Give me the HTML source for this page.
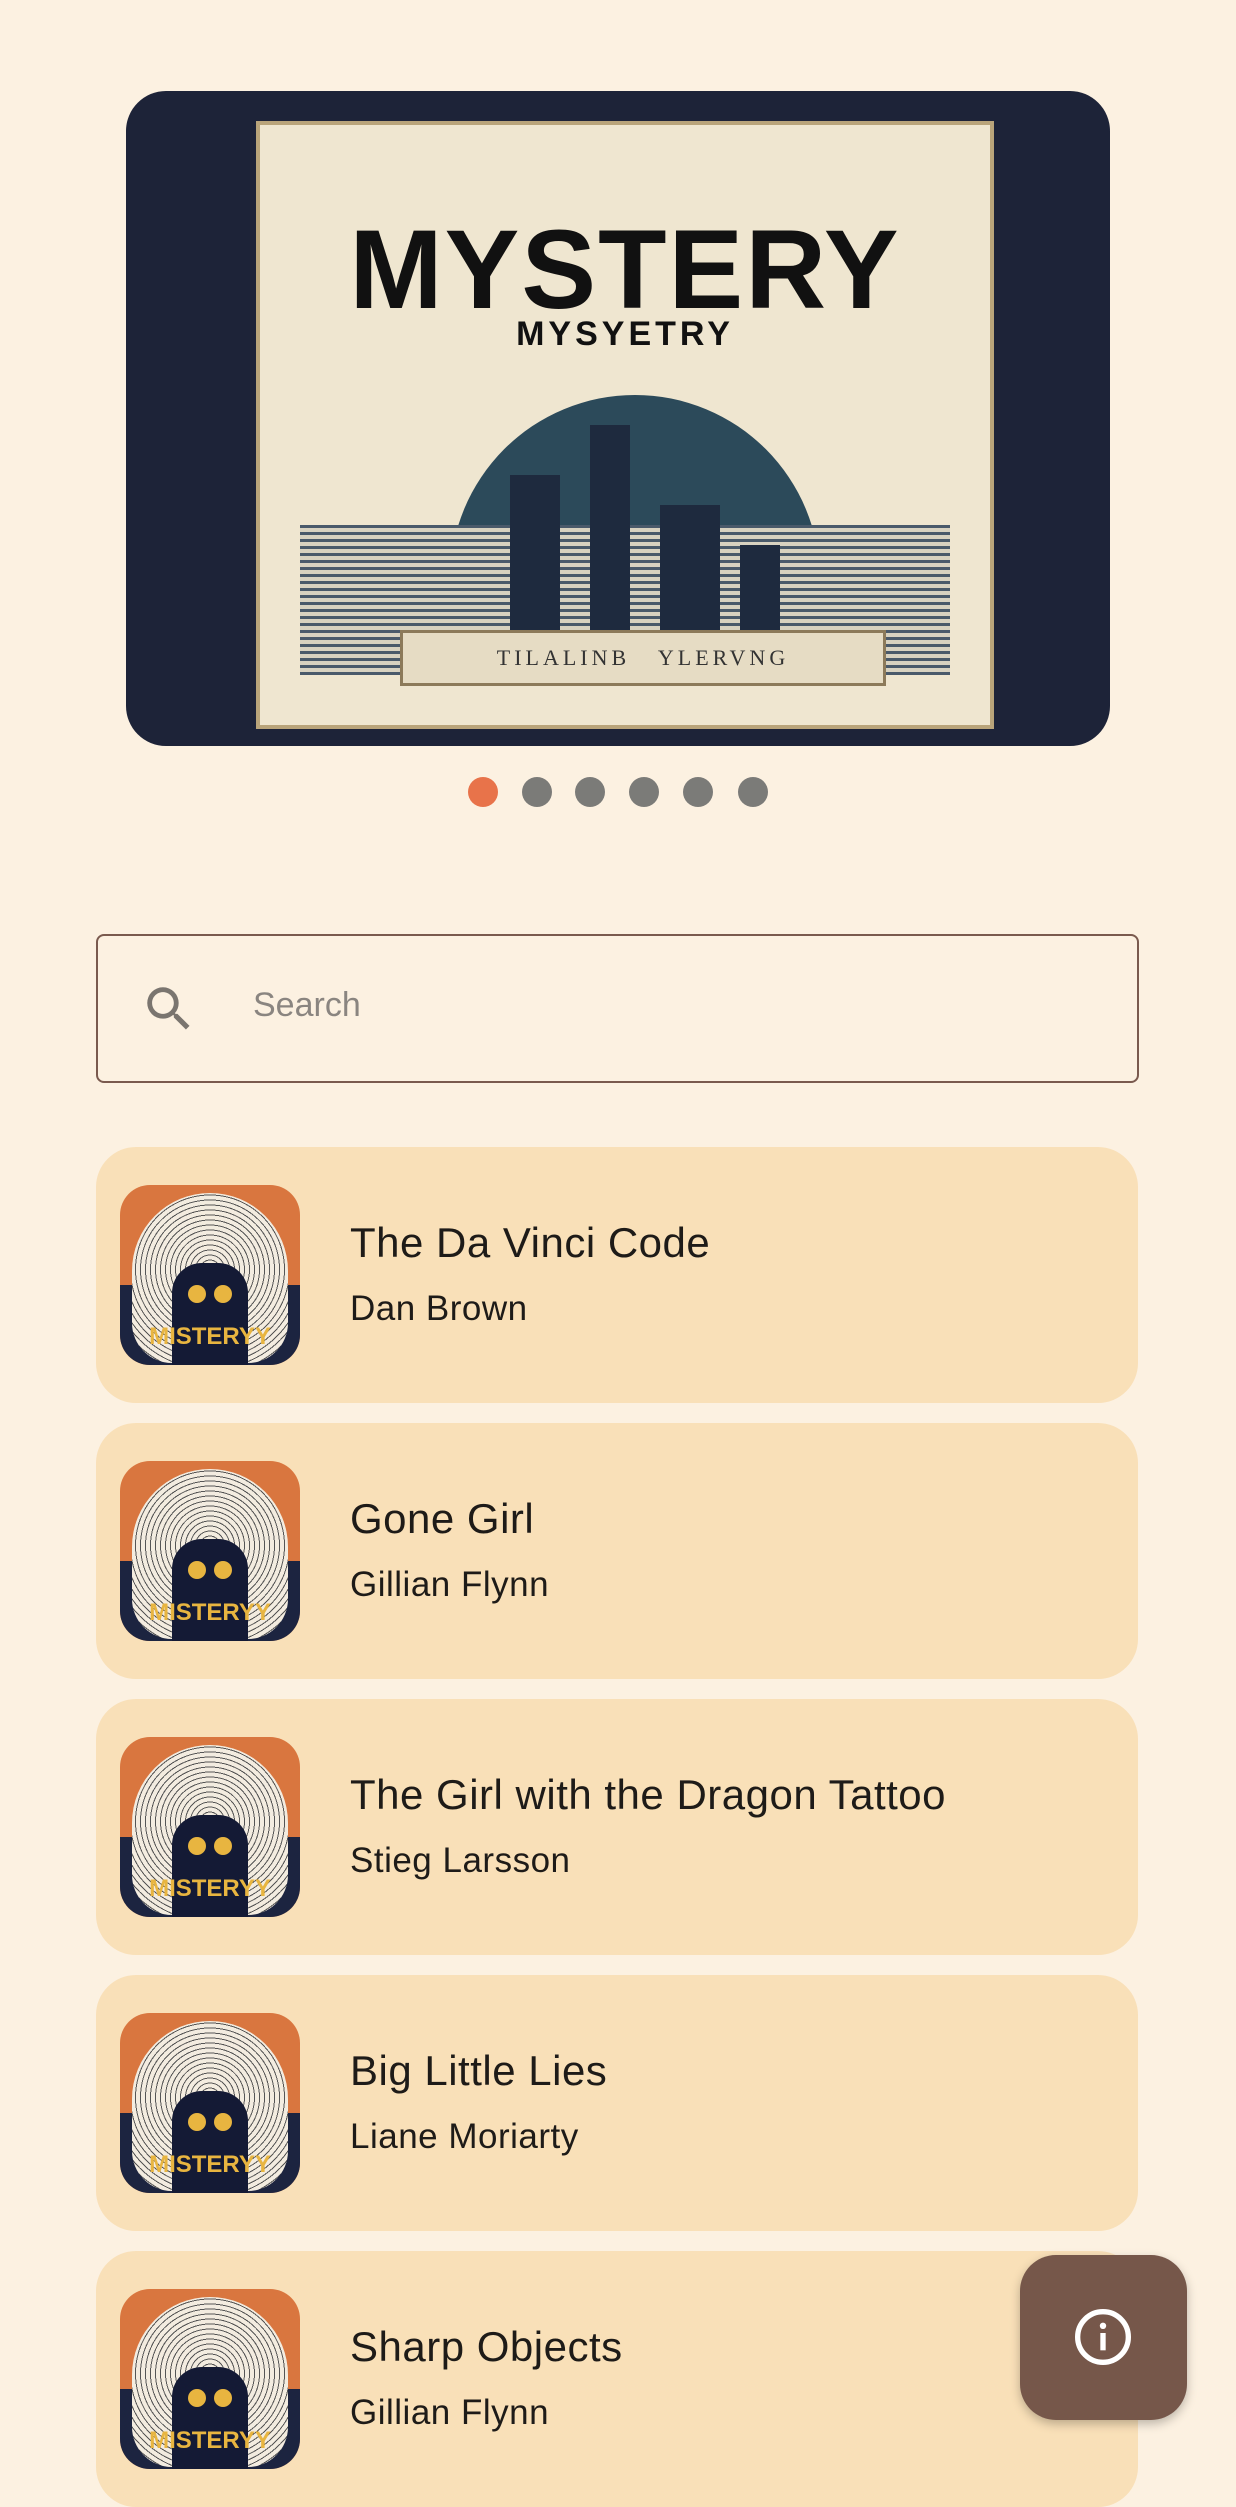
<!DOCTYPE html>
<html><head><meta charset="utf-8"><style>
body{margin:0;width:1236px;height:2468px;background:#fcf1e1;overflow:hidden;font-family:"Liberation Sans",sans-serif;position:relative}
.hero{position:absolute;left:126px;top:91px;width:984px;height:655px;border-radius:40px;overflow:hidden;background:#1d2338}
.hero .frame{position:absolute;left:130px;top:30px;width:730px;height:600px;background:#efe6d0;border:4px solid #b9a47a}
.hero .t1{position:absolute;left:0;right:0;top:80px;text-align:center;font:bold 112px "Liberation Sans",sans-serif;color:#111;letter-spacing:2px}
.hero .t2{position:absolute;left:0;right:0;top:190px;text-align:center;font:bold 34px "Liberation Sans",sans-serif;color:#111;letter-spacing:4px}
.hero .moon{position:absolute;left:190px;top:270px;width:370px;height:280px;border-radius:185px 185px 0 0;background:#2c4a5a}
.hero .city{position:absolute;left:40px;top:400px;width:650px;height:150px;background:repeating-linear-gradient(#4a5a6a 0 3px,#d8d2c0 3px 7px)}
.hero .bld{position:absolute;background:#1e2a3e}
.hero .ban{position:absolute;left:140px;top:505px;width:480px;height:50px;background:#e6dcc4;border:3px solid #8c7a5a;text-align:center;font:22px "Liberation Serif",serif;line-height:50px;letter-spacing:4px;color:#333}
.dots{position:absolute;top:777px;left:468px}
.dot{position:absolute;width:30px;height:30px;border-radius:50%;background:#7b7b78;top:0}
.search{position:absolute;left:96px;top:934px;width:1039px;height:145px;border:2.5px solid #7a5a4e;border-radius:8px;box-sizing:content-box}
.search span{position:absolute;left:155px;top:50px;font-size:34px;color:#8a8580}
.card{position:absolute;left:96px;width:1042px;height:256px;background:#f9e0b8;border-radius:40px}
.thumb{position:absolute;left:24px;top:38px;width:180px;height:180px;border-radius:30px;overflow:hidden;background:#d9763f}
.thumb .c{position:absolute;left:12px;top:8px;width:156px;height:170px;border-radius:78px 78px 40px 40px;background:repeating-radial-gradient(circle at 50% 45%,#f3ece0 0 4px,#555 4px 5px)}
.thumb .b{position:absolute;left:0;top:100px;width:180px;height:80px;background:#1c2440}
.thumb .cat{position:absolute;left:52px;top:78px;width:76px;height:102px;border-radius:30px 30px 0 0;background:#141a35}
.thumb .m{position:absolute;left:0;right:0;top:138px;text-align:center;font:bold 24px "Liberation Sans",sans-serif;color:#e8b540}
.thumb .e1,.thumb .e2{position:absolute;top:100px;width:18px;height:18px;border-radius:50%;background:#e8b540}
.title{position:absolute;left:254px;top:72px;font-size:42px;color:#1e1b18;letter-spacing:.5px}
.author{position:absolute;left:254px;top:142px;font-size:35px;color:#1e1b18;letter-spacing:.5px}
.fab{position:absolute;left:1020px;top:2255px;width:167px;height:165px;border-radius:36px;background:#76574a;box-shadow:0 4px 10px rgba(0,0,0,.25)}
</style></head><body>
<div class="hero">
 <div class="frame">
  <div class="t1">MYSTERY</div>
  <div class="t2">MYSYETRY</div>
  <div class="moon"></div>
  <div class="city"></div>
  <div class="bld" style="left:250px;top:350px;width:50px;height:200px"></div>
  <div class="bld" style="left:330px;top:300px;width:40px;height:250px"></div>
  <div class="bld" style="left:400px;top:380px;width:60px;height:170px"></div>
  <div class="bld" style="left:480px;top:420px;width:40px;height:130px"></div>
  <div class="ban">TILALINB &nbsp; YLERVNG</div>
 </div>
</div>
<div class="dots">
 <div class="dot" style="left:0;background:#e8734a"></div>
 <div class="dot" style="left:54px"></div>
 <div class="dot" style="left:107px"></div>
 <div class="dot" style="left:161px"></div>
 <div class="dot" style="left:215px"></div>
 <div class="dot" style="left:270px"></div>
</div>
<div class="search">
 <svg style="position:absolute;left:42px;top:44px" width="58" height="58" viewBox="0 0 24 24"><path fill="#7a756f" d="M15.5 14h-.79l-.28-.27A6.47 6.47 0 0 0 16 9.5 6.5 6.5 0 1 0 9.5 16c1.61 0 3.09-.59 4.23-1.57l.27.28v.79l5 4.99L20.49 19l-4.99-5zm-6 0C7.01 14 5 11.99 5 9.5S7.01 5 9.5 5 14 7.01 14 9.5 11.99 14 9.5 14z"/></svg>
 <span>Search</span>
</div>

<div class="card" style="top:1147px"><div class="thumb"><div class="b"></div><div class="c"></div><div class="cat"></div><div class="e1" style="left:68px"></div><div class="e2" style="left:94px"></div><div class="m">MISTERYY</div></div><div class="title">The Da Vinci Code</div><div class="author">Dan Brown</div></div>
<div class="card" style="top:1423px"><div class="thumb"><div class="b"></div><div class="c"></div><div class="cat"></div><div class="e1" style="left:68px"></div><div class="e2" style="left:94px"></div><div class="m">MISTERYY</div></div><div class="title">Gone Girl</div><div class="author">Gillian Flynn</div></div>
<div class="card" style="top:1699px"><div class="thumb"><div class="b"></div><div class="c"></div><div class="cat"></div><div class="e1" style="left:68px"></div><div class="e2" style="left:94px"></div><div class="m">MISTERYY</div></div><div class="title">The Girl with the Dragon Tattoo</div><div class="author">Stieg Larsson</div></div>
<div class="card" style="top:1975px"><div class="thumb"><div class="b"></div><div class="c"></div><div class="cat"></div><div class="e1" style="left:68px"></div><div class="e2" style="left:94px"></div><div class="m">MISTERYY</div></div><div class="title">Big Little Lies</div><div class="author">Liane Moriarty</div></div>
<div class="card" style="top:2251px"><div class="thumb"><div class="b"></div><div class="c"></div><div class="cat"></div><div class="e1" style="left:68px"></div><div class="e2" style="left:94px"></div><div class="m">MISTERYY</div></div><div class="title">Sharp Objects</div><div class="author">Gillian Flynn</div></div>

<div class="fab"><svg style="position:absolute;left:51px;top:50px" width="64" height="64" viewBox="0 0 24 24"><circle cx="12" cy="12" r="9.5" fill="none" stroke="#fff" stroke-width="2"/><rect x="11" y="10.5" width="2" height="6.5" fill="#fff"/><circle cx="12" cy="7.8" r="1.2" fill="#fff"/></svg></div>
</body></html>
